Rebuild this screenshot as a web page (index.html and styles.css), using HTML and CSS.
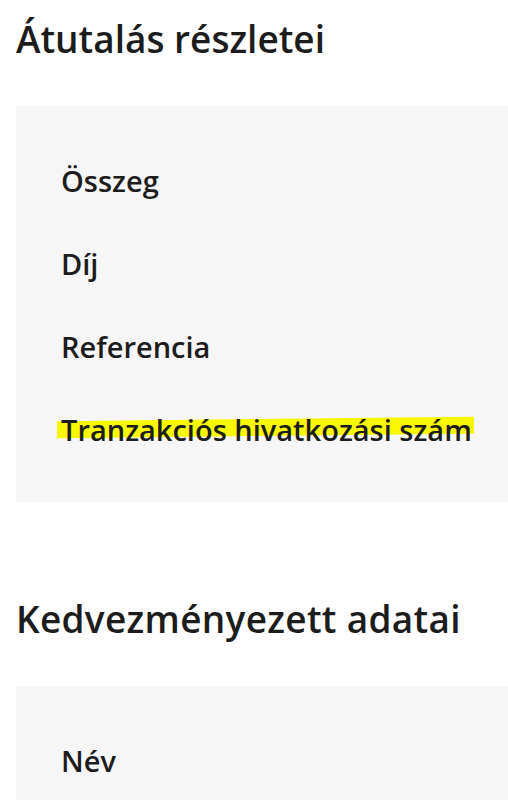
FILE: index.html
```html
<!DOCTYPE html>
<html lang="hu">
<head>
<meta charset="utf-8">
<link rel="stylesheet" href="styles.css">
</head>
<body>
<main class="page">
  <h2 class="title">Átutalás részletei</h2>
  <section class="card">
    <div class="item">Összeg</div>
    <div class="item">Díj</div>
    <div class="item">Referencia</div>
    <div class="item"><span class="hl">Tranzakciós hivatkozási szám</span></div>
  </section>
  <h2 class="title title-2">Kedvezményezett adatai</h2>
  <section class="card">
    <div class="item">Név</div>
  </section>
</main>
</body>
</html>
```
FILE: styles.css
```css
html, body {
  margin: 0;
  padding: 0;
  background: #ffffff;
}
body {
  font-family: "Open Sans", Lato, sans-serif;
  color: #1c1c1c;
}
.page {
  padding-left: 16px;
}
.title {
  margin: 0;
  padding-top: 17px;
  font-size: 37px;
  line-height: 44px;
  font-weight: 600;
  letter-spacing: 0;
}
.title-2 {
  padding-top: 95px;
  letter-spacing: 0.3px;
}
.card {
  margin-top: 45px;
  background: #f6f6f6;
  padding: 57px 0 54px 45px;
  display: flex;
  flex-direction: column;
  gap: 47px;
}
.item {
  font-size: 29px;
  line-height: 36px;
  font-weight: 600;
}
.hl {
  position: relative;
  z-index: 0;
}
.hl::before {
  content: "";
  position: absolute;
  left: -4px;
  right: -2px;
  top: 9px;
  height: 17px;
  background: #f8f800;
  transform: rotate(-0.6deg);
  z-index: -1;
}
```
